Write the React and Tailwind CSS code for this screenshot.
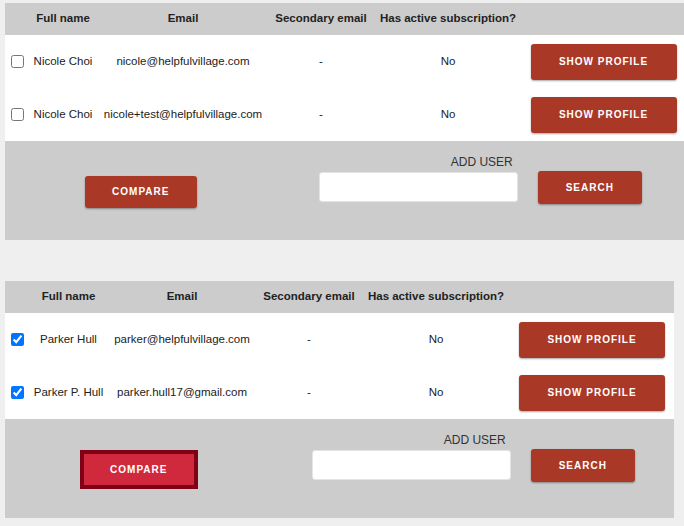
import React from "react";

const btn =
  "bg-[#aa3826] text-white font-bold uppercase tracking-[1px] text-[10px] rounded-[3px] shadow-[0_1px_2px_rgba(0,0,0,0.35)]";

function UserTable({ cols, users, compareActive, widthClass }) {
  return (
    <div className={`${widthClass} bg-[#cccccc]`}>
      <table className="w-full table-fixed border-collapse text-[11.5px] text-[#222]">
        <colgroup>
          {cols.map((w, i) => (
            <col key={i} style={{ width: w }} />
          ))}
        </colgroup>
        <thead>
          <tr className="h-[32px]">
            <th></th>
            <th className="font-bold text-center">Full name</th>
            <th className="font-bold text-center">Email</th>
            <th className="font-bold text-center">Secondary email</th>
            <th className="font-bold text-center whitespace-nowrap">Has active subscription?</th>
            <th></th>
          </tr>
        </thead>
        <tbody className="bg-white">
          {users.map((u, i) => (
            <tr key={i} className="h-[53px]">
              <td className="text-center align-middle">
                <input
                  type="checkbox"
                  defaultChecked={u.checked}
                  className="w-[13px] h-[13px] m-0 align-middle accent-[#0075ff]"
                />
              </td>
              <td className="text-center whitespace-nowrap text-[#222]">{u.name}</td>
              <td className="text-center whitespace-nowrap text-[#222]">{u.email}</td>
              <td className="text-center">-</td>
              <td className="text-center">No</td>
              <td className="text-center">
                <button className={`${btn} w-[146px] h-[36px]`}>Show profile</button>
              </td>
            </tr>
          ))}
        </tbody>
      </table>
      <div className="flex h-[99px]">
        <div className="w-[40%] flex items-center justify-center pt-[2px]">
          {compareActive ? (
            <button className="w-[118px] h-[39px] bg-[#d0283c] border-[4px] border-[#800015] text-white font-bold uppercase tracking-[1px] text-[10px]">
              Compare
            </button>
          ) : (
            <button className={`${btn} w-[112px] h-[32px]`}>Compare</button>
          )}
        </div>
        <div className="w-[60%] flex items-start justify-center pt-[14px]">
          <div className="flex flex-col items-end">
            <span className="text-[12px] text-[#333] leading-[14px] mr-[5px] mb-[3px]">ADD USER</span>
            <input
              type="text"
              className="w-[199px] h-[30px] bg-white rounded-[3px] border border-[#e4e4e4] outline-none"
            />
          </div>
          <button className={`${btn} w-[104px] h-[33px] ml-[20px] mt-[16px]`}>Search</button>
        </div>
      </div>
    </div>
  );
}

export default function App() {
  const first = [
    { name: "Nicole Choi", email: "nicole@helpfulvillage.com", checked: false },
    { name: "Nicole Choi", email: "nicole+test@helpfulvillage.com", checked: false },
  ];
  const second = [
    { name: "Parker Hull", email: "parker@helpfulvillage.com", checked: true },
    { name: "Parker P. Hull", email: "parker.hull17@gmail.com", checked: true },
  ];
  return (
    <div
      className="w-full min-h-[526px] overflow-hidden bg-[#efefef] pl-[5px] pt-[3px]"
      style={{ fontFamily: '"Liberation Sans", Arial, sans-serif' }}
    >
      <UserTable
        cols={[24, 68, 172, 104, 150, 161]}
        users={first}
        widthClass="w-[679px]"
      />
      <div className="h-[41px]"></div>
      <UserTable
        cols={[24, 79, 148, 106, 148, 164]}
        users={second}
        compareActive
        widthClass="w-[669px]"
      />
    </div>
  );
}
